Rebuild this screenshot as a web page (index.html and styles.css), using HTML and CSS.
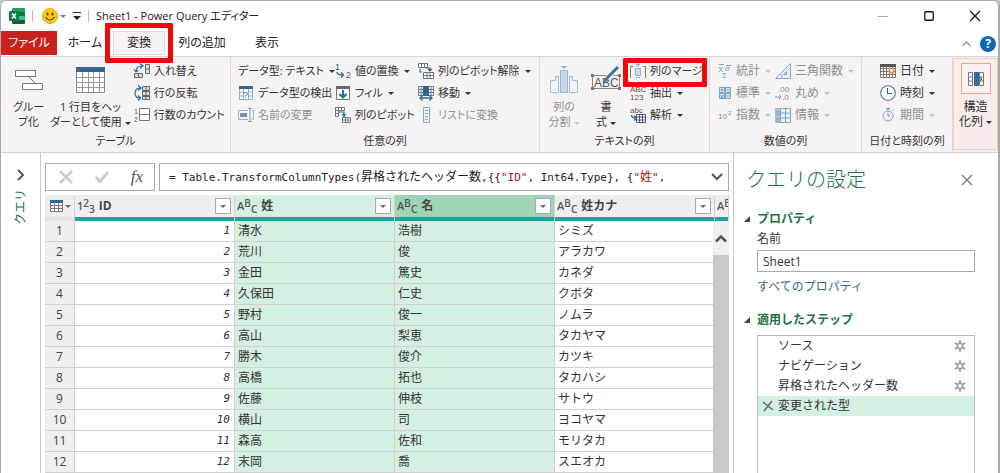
FILE: index.html
```html
<!DOCTYPE html>
<html lang="ja">
<head>
<meta charset="utf-8">
<title>Sheet1 - Power Query エディター</title>
<link rel="stylesheet" href="styles.css">
</head>
<body>
<div class="window">
  <header class="titlebar">
    <svg class="app-icon" width="16" height="16" viewBox="0 0 16 16"><rect x="3" width="13" height="16" rx="1" fill="#21a366"/><path d="M3 4h13v4H3z" fill="#107c41"/><path d="M9 8h7v4H9z" fill="#33c481"/><path d="M3 12h13v3l-1 1H4l-1-1z" fill="#185c37"/><rect y="3" width="10" height="10" rx="1" fill="#107c41"/><path d="M3 5.500l4 5M7 5.500l-4 5" stroke="#fff" stroke-width="1.500"/></svg>
    <span class="sep"></span>
    <button class="quick" aria-label="フィードバック"><svg width="16" height="16" viewBox="0 0 16 16"><circle cx="8" cy="8" r="7.500" fill="#f8c51c" stroke="#e7a614"/><ellipse cx="5.500" cy="6" rx="1" ry="1.600" fill="#5d3b08"/><ellipse cx="10.500" cy="6" rx="1" ry="1.600" fill="#5d3b08"/><path d="M3.500 9q4.500 6 9 0" fill="none" stroke="#5d3b08" stroke-width="1.200"/></svg><i class="caret blue"></i></button>
    <button class="quick" aria-label="クイック アクセス"><svg width="8" height="9" viewBox="0 0 8 9"><path d="M0 .5h8" stroke="#222"/><path d="M0 4h8L4 8z" fill="#222"/></svg></button>
    <span class="sep"></span>
    <h1>Sheet1 - Power Query エディター</h1>
    <div class="win-buttons">
      <button aria-label="最小化"><svg width="10" height="10"><path d="M0 5.500h10" stroke="#aaa"/></svg></button>
      <button aria-label="最大化"><svg width="10" height="10"><rect x=".75" y=".75" width="8.500" height="8.500" rx="1" fill="none" stroke="#111" stroke-width="1.300"/></svg></button>
      <button aria-label="閉じる"><svg width="10" height="10"><path d="M0 0l10 10M10 0L0 10" stroke="#111" stroke-width="1.200"/></svg></button>
    </div>
  </header>

  <nav class="tabs">
    <button class="file">ファイル</button>
    <button>ホーム</button>
    <button class="active marked">変換</button>
    <button class="wide">列の追加</button>
    <button>表示</button>
    <div class="help">
      <button aria-label="リボンを折りたたむ"><svg width="9" height="6"><path d="M.5 5l4-4 4 4" fill="none" stroke="#999" stroke-width="1.300"/></svg></button>
      <button class="help-button">?</button>
    </div>
  </nav>

  <section class="ribbon">
    <div class="group">
      <div class="tools g-table">
        <button class="big"><svg width="28" height="26" viewBox="0 0 28 26"><path d="M13 9l7 7" stroke="#777"/><path d="M.5 3.500h20v6H.5zM7.500 16.500h20v6h-20z" fill="#fff" stroke="#777"/></svg><span>グルー<br>プ化</span></button>
        <button class="big"><svg width="29" height="26" viewBox="0 0 29 26"><path d="M.5.500h28v25H.5z" fill="#fff" stroke="#888"/><path d="M0 0h29v5H0z" fill="#35678e"/><path d="M6.500 5v20M12.500 5v20M17.500 5v20M23.500 5v20M1 10.500h27M1 15.500h27M1 20.500h27" stroke="#999"/></svg><span>1 行目をヘッ<br>ダーとして使用<i class="caret"></i></span></button>
        <div class="stack">
          <button class="tool"><svg width="16" height="16" viewBox="0 0 16 16"><path d="M11.500 1.500h4v9h-4zM11.500 6h4M.5 10.500h8v4h-8zM4.500 10.500v4" fill="#ddd" stroke="#666"/><path d="M2 9q0-6 6-6M6 .5L9 3 6 5.500M0 6.500L2 9l2.500-2" fill="none" stroke="#2b6a9c" stroke-width="1.200"/></svg>入れ替え</button>
          <button class="tool"><svg width="16" height="16" viewBox="0 0 16 16"><path d="M8.500 1.500h7v4h-7zM8.500 6.500h7v4h-7zM8.500 11.500h7v3h-7zM12 1.500v13" fill="#ddd" stroke="#666"/><path d="M7 3Q1 3 1 8t5 5M4 .5L7 3 4 5.500M4 10.500L6.500 13 4 15.500" fill="none" stroke="#2b6a9c" stroke-width="1.200"/></svg>行の反転</button>
          <button class="tool"><svg width="16" height="16" viewBox="0 0 16 16"><path d="M5.500 1.500h10v12h-10zM5.500 7.500h10" fill="#fff" stroke="#777"/><text x="0" y="7" class="t7 blue-t">1</text><text x="0" y="15" class="t7 blue-t">2</text></svg>行数のカウント</button>
        </div>
      </div>
      <h2>テーブル</h2>
    </div>

    <div class="group">
      <div class="tools g-any">
        <div class="stack">
          <button class="tool plain">データ型: テキスト<i class="caret"></i></button>
          <button class="tool"><svg width="16" height="16" viewBox="0 0 16 16"><path d="M1.500 1.500h13v13h-13zM1.500 7h13M1.500 11h13M5.500 3v12M10.500 3v12" fill="#fff" stroke="#9ab"/><path d="M1 1h14v3H1z" fill="#35678e"/><path d="M6 5h4v8H6z" fill="#fff"/><text x="5" y="13" class="t9 blue-t">?</text></svg>データ型の検出</button>
          <button class="tool" disabled><svg width="16" height="16" viewBox="0 0 16 16"><path d="M10 3.500H.5v9H10M14 3.500h1.500v9H14" fill="none" stroke="#9ab0c4"/><path d="M2 6h7v4H2z" fill="#7395b5"/><path d="M10 1.500h4M10 14.500h4M12 1.500v13" stroke="#8297ab"/></svg>名前の変更</button>
        </div>
        <div class="stack">
          <button class="tool"><svg width="16" height="16" viewBox="0 0 16 16"><text x="0" y="7" class="t9">1</text><text x="11" y="15" class="t9">2</text><path d="M2 9q0 3 6 3M6 9.500L8.500 12 6 14.500" fill="none" stroke="#2b6a9c" stroke-width="1.400"/></svg>値の置換<i class="caret"></i></button>
          <button class="tool"><svg width="16" height="16" viewBox="0 0 16 16"><path d="M1.500 1.500h13v13h-13z" fill="#fff" stroke="#777"/><path d="M1 1h14v3H1z" fill="#666"/><path d="M8 5v8M4.500 9L8 12.500 11.500 9" fill="none" stroke="#2b6a9c" stroke-width="2"/></svg>フィル<i class="caret"></i></button>
          <button class="tool"><svg width="16" height="16" viewBox="0 0 16 16"><path d="M.5.500h9v3h-9zM.5.500v9h3v-9M6.500.500v3M.5 6.500h3M7.500 10.500h8v5h-8zM7.500 13h8M10.500 10.500v5M13 10.500v5" fill="#fff" stroke="#777"/><path d="M4 5h5v4M7 7l2 2.500L11 7" fill="none" stroke="#2b6a9c" stroke-width="1.200"/></svg>列のピボット</button>
        </div>
        <div class="stack">
          <button class="tool"><svg width="16" height="16" viewBox="0 0 16 16"><path d="M.5.500h9v4h-9zM3.500.500v4M6.500.500v4M5.500 9.500h10v6h-10zM5.500 12.500h10M9 9.500v6M12 9.500v6" fill="#fff" stroke="#777"/><path d="M2 6v3h2M8 5h4v3M10 6l2 2 2-2" fill="none" stroke="#2b6a9c" stroke-width="1.200"/></svg>列のピボット解除<i class="caret"></i></button>
          <button class="tool"><svg width="16" height="16" viewBox="0 0 16 16"><path d="M.5 1.500h15v9H.5zM.5 4.500h15M.5 7.500h15M3 1.500v9M13 1.500v9" fill="#fff" stroke="#777"/><path d="M5 1h6v10H5z" fill="#2f6690"/><path d="M2 13h12M4.500 10.500L2 13l2.500 2.500M11.500 10.500L14 13l-2.500 2.500" fill="none" stroke="#2b6a9c" stroke-width="1.300"/></svg>移動<i class="caret"></i></button>
          <button class="tool" disabled><svg width="16" height="16" viewBox="0 0 16 16"><path d="M5.500.500h6v15h-6zM7 3.500h3M7 6.500h3M7 9.500h3M7 12.500h3" fill="#edf3fa" stroke="#8ca9c7"/></svg>リストに変換</button>
        </div>
      </div>
      <h2>任意の列</h2>
    </div>

    <div class="group">
      <div class="tools g-text">
        <button class="big" disabled><svg width="28" height="28" viewBox="0 0 28 28"><path d="M10.500 4.500h7v22h-7z" fill="#c5d7ea" stroke="#9db3c9"/><path d="M.5 26.500v-12h5v-4h3v16zM27.500 26.500v-12h-5v-4h-3v16z" fill="#eef3f9" stroke="#a9bccf"/><path d="M11 0h6l-3 3z" fill="#9db3c9"/></svg><span>列の<br>分割<i class="caret"></i></span></button>
        <button class="big"><svg width="30" height="28" viewBox="0 0 30 28"><path d="M1.500 9.500h27v13h-27z" fill="none" stroke="#888"/><path d="M0 8h3v3H0zM27 8h3v3h-3zM0 21h3v3H0zM27 21h3v3h-3z" fill="#777"/><text x="3" y="21" class="t12">ABC</text><path d="M27 1L15 13" stroke="#f5f3f4" stroke-width="5"/><path d="M27 1L16 12" stroke="#35729f" stroke-width="3"/><path d="M15 11l3 3-6 3z" fill="#35729f"/></svg><span>書<br>式<i class="caret"></i></span></button>
        <div class="stack">
          <button class="tool marked"><svg width="16" height="16" viewBox="0 0 16 16"><path d="M3 3.500H.5V15M13 3.500h2.500V15" fill="none" stroke="#777"/><path d="M5.500 5.500h5v7h-5z" fill="#cbdced" stroke="#8fabc7"/><path d="M6 1.500h4M6 14.500h4M8 0v4" stroke="#8fabc7"/></svg>列のマージ</button>
          <button class="tool"><svg width="16" height="16" viewBox="0 0 16 16"><text x="0" y="7" class="t8">ABC</text><text x="0" y="15" class="t8">123</text></svg>抽出<i class="caret"></i></button>
          <button class="tool"><svg width="16" height="16" viewBox="0 0 16 16"><text x="0" y="6" class="t8">abc</text><path d="M6.500 7.500h9v8h-9zM6.500 10h9M6.500 13h9M9.500 8v7M12.500 8v7" fill="#fff" stroke="#558"/><path d="M1.500 8q0 3 4 3M4 8.500L6.500 11 4 13.500" fill="none" stroke="#2b6a9c" stroke-width="1.300"/></svg>解析<i class="caret"></i></button>
        </div>
      </div>
      <h2>テキストの列</h2>
    </div>

    <div class="group">
      <div class="tools g-number">
        <div class="stack">
          <button class="tool" disabled><svg width="14" height="16" viewBox="0 0 14 16"><path d="M1 1.500h5M8 2.500h5" stroke="#8ba1b8"/><text x="0" y="9" class="t8">X</text><text x="7" y="8" class="t8">σ</text><text x="4" y="15" class="t8">Σ</text></svg>統計<i class="caret"></i></button>
          <button class="tool" disabled><svg width="14" height="16" viewBox="0 0 14 16"><path d="M1.500 2.500h5v5h-5zM7.500 2.500h5v5h-5zM1.500 8.500h5v5h-5zM7.500 8.500h5v5h-5z" fill="#dce7f3" stroke="#7f9fc1"/><path d="M2.500 5h3M4 3.500v3M8.500 5h3M2.500 10l3 3M5.500 10l-3 3M8.500 11h3" stroke="#6d8fb4"/></svg>標準<i class="caret"></i></button>
          <button class="tool" disabled><svg width="14" height="16" viewBox="0 0 14 16"><text x="0" y="12" class="t8">10</text><text x="10" y="8" class="t6">2</text></svg>指数<i class="caret"></i></button>
        </div>
        <div class="stack">
          <button class="tool" disabled><svg width="16" height="16" viewBox="0 0 16 16"><path d="M15.500.5v15H.5zM11.500 8.500v3h-3zM5 11q3 1 2 4" fill="#e6eef8" stroke="#8ba6c4"/></svg>三角関数<i class="caret"></i></button>
          <button class="tool" disabled><svg width="16" height="16" viewBox="0 0 16 16"><text x="3" y="7" class="t8">.00</text><text x="7" y="15" class="t8">.0</text><path d="M0 12h6M4 10l2 2-2 2" fill="none" stroke="#6b93bd"/></svg>丸め<i class="caret"></i></button>
          <button class="tool" disabled><svg width="16" height="16" viewBox="0 0 16 16"><path d="M.5 1.500h15v14H.5zM5.500 1.500v14M5.500 6h10M5.500 11h10M10.500 1.500v14" fill="#edf3fa" stroke="#86a1bf"/><path d="M0 1h5v15H0z" fill="#a9c0da"/><text x="1" y="8" class="t6">1</text><text x="1" y="15" class="t6">3</text></svg>情報<i class="caret"></i></button>
        </div>
      </div>
      <h2>数値の列</h2>
    </div>

    <div class="group">
      <div class="tools g-date">
        <div class="stack">
          <button class="tool"><svg width="16" height="16" viewBox="0 0 16 16"><path d="M.5 1.500h15v13H.5zM.5 5.500h15M.5 8.500h15M.5 11.500h15M3.500 4v10M6.500 4v10M9.500 4v10M12.500 4v10" fill="#fff" stroke="#777"/><path d="M0 1h16v3H0z" fill="#555"/><path d="M9.500 5.500h4v4h-4z" fill="#fff" stroke="#e08a3c" stroke-width="1.500"/></svg>日付<i class="caret"></i></button>
          <button class="tool"><svg width="16" height="16" viewBox="0 0 16 16"><circle cx="8" cy="8" r="7.300" fill="#fff" stroke="#5d7489" stroke-width="1.100"/><path d="M7.500 3v5.500H12" fill="none" stroke="#2b6a9c" stroke-width="1.200"/></svg>時刻<i class="caret"></i></button>
          <button class="tool" disabled><svg width="16" height="16" viewBox="0 0 16 16"><circle cx="8" cy="9" r="5" fill="#eef3fa" stroke="#8ba6c4"/><path d="M6 1.500h4M8 1.500V4M12 4l1.500-1.500M8 6v3h2" fill="none" stroke="#6f91b5"/></svg>期間<i class="caret"></i></button>
        </div>
      </div>
      <h2>日付と時刻の列</h2>
    </div>

    <button class="big structured"><span class="structured-icon"><svg width="16" height="14" viewBox="0 0 16 14"><path d="M.5.500h4v13h-4zM.5 5h4M.5 9h4M11.500.500h4v13h-4zM11.500 5h4M11.500 9h4" fill="#fff" stroke="#777"/><path d="M6 0h5v14H6z" fill="#2f6f9f"/><path d="M9 7h5M12 5l2 2-2 2" fill="none" stroke="#2f6f9f"/></svg></span><span>構造<br>化列<i class="caret"></i></span></button>
  </section>

  <main class="workspace">
    <aside class="queries">
      <button aria-label="展開"><svg width="8" height="12"><path d="M1 1l5 5-5 5" fill="none" stroke="#555" stroke-width="2"/></svg></button>
      <span class="vertical">クエリ</span>
    </aside>

    <section class="editor">
      <div class="formula-row">
        <div class="formula-actions">
          <button aria-label="取消"><svg width="14" height="12"><path d="M1 0l12 12M13 0L1 12" stroke="#ccc" stroke-width="2.500"/></svg></button>
          <button aria-label="確定"><svg width="14" height="12"><path d="M1 6l4 4.500L13 1" fill="none" stroke="#ccc" stroke-width="3"/></svg></button>
          <button class="fx">fx</button>
        </div>
        <div class="formula"><code>= Table.TransformColumnTypes(<span class="jp">昇格されたヘッダー数</span>,{{<b>"ID"</b>, Int64.Type}, {<b>"<span class="jp">姓</span>"</b>,</code>
          <button aria-label="数式バーを展開"><svg width="12" height="8"><path d="M1 1l5 5 5-5" fill="none" stroke="#555" stroke-width="2"/></svg></button></div>
      </div>

      <div class="grid-wrap">
        <table>
          <colgroup><col class="c-no"><col class="c-data"><col class="c-data"><col class="c-data"><col class="c-data"><col></colgroup>
          <thead><tr>
            <th><div class="head corner"><svg width="13" height="12" viewBox="0 0 13 12"><path d="M.5.500h12v11H.5zM.5 5.500h12M.5 8.500h12M4.500 3v8M8.500 3v8" fill="#fff" stroke="#777"/><path d="M0 0h13v3H0z" fill="#35678e"/></svg><i class="caret"></i></div><div class="quality off"></div></th>
            <th><div class="head"><span class="type"><span>1</span><span>2</span><span>3</span></span>ID<button class="filter" aria-label="ID フィルター"><i class="caret"></i></button></div><div class="quality"></div></th>
            <th class="sel"><div class="head"><span class="type"><span>A</span><span>B</span><span>C</span></span>姓<button class="filter" aria-label="姓 フィルター"><i class="caret"></i></button></div><div class="quality"></div></th>
            <th class="sel strong"><div class="head"><span class="type"><span>A</span><span>B</span><span>C</span></span>名<button class="filter" aria-label="名 フィルター"><i class="caret"></i></button></div><div class="quality"></div></th>
            <th><div class="head"><span class="type"><span>A</span><span>B</span><span>C</span></span>姓カナ<button class="filter" aria-label="姓カナ フィルター"><i class="caret"></i></button></div><div class="quality"></div></th>
            <th><div class="head"><span class="type"><span>A</span><span>B</span><span>C</span></span></div><div class="quality"></div></th>
          </tr></thead>
          <tbody>
            <tr><th>1</th><td class="num">1</td><td class="sel">清水</td><td class="sel">浩樹</td><td>シミズ</td><td></td></tr>
            <tr><th>2</th><td class="num">2</td><td class="sel">荒川</td><td class="sel">俊</td><td>アラカワ</td><td></td></tr>
            <tr><th>3</th><td class="num">3</td><td class="sel">金田</td><td class="sel">篤史</td><td>カネダ</td><td></td></tr>
            <tr><th>4</th><td class="num">4</td><td class="sel">久保田</td><td class="sel">仁史</td><td>クボタ</td><td></td></tr>
            <tr><th>5</th><td class="num">5</td><td class="sel">野村</td><td class="sel">俊一</td><td>ノムラ</td><td></td></tr>
            <tr><th>6</th><td class="num">6</td><td class="sel">高山</td><td class="sel">梨恵</td><td>タカヤマ</td><td></td></tr>
            <tr><th>7</th><td class="num">7</td><td class="sel">勝木</td><td class="sel">俊介</td><td>カツキ</td><td></td></tr>
            <tr><th>8</th><td class="num">8</td><td class="sel">高橋</td><td class="sel">拓也</td><td>タカハシ</td><td></td></tr>
            <tr><th>9</th><td class="num">9</td><td class="sel">佐藤</td><td class="sel">伸枝</td><td>サトウ</td><td></td></tr>
            <tr><th>10</th><td class="num">10</td><td class="sel">横山</td><td class="sel">司</td><td>ヨコヤマ</td><td></td></tr>
            <tr><th>11</th><td class="num">11</td><td class="sel">森高</td><td class="sel">佐和</td><td>モリタカ</td><td></td></tr>
            <tr><th>12</th><td class="num">12</td><td class="sel">末岡</td><td class="sel">喬</td><td>スエオカ</td><td></td></tr>
          </tbody>
        </table>
        <div class="scrollbar"><button aria-label="上へ"><svg width="12" height="9"><path d="M1 7.500l5-5 5 5" fill="none" stroke="#555" stroke-width="2.500"/></svg></button><div class="thumb"></div></div>
      </div>
    </section>

    <aside class="settings">
      <div class="settings-head"><h2>クエリの設定</h2><button aria-label="閉じる"><svg width="12" height="12"><path d="M1 1l10 10M11 1L1 11" stroke="#777" stroke-width="1.300"/></svg></button></div>
      <h3><i class="tri"></i>プロパティ</h3>
      <div class="props">
        <label for="query-name">名前</label>
        <input id="query-name" value="Sheet1">
        <a href="#">すべてのプロパティ</a>
      </div>
      <h3><i class="tri"></i>適用したステップ</h3>
      <ul class="steps">
        <li><span></span>ソース<svg class="gear" width="12" height="12" viewBox="0 0 12 12"><circle cx="6" cy="6" r="2.700"/><path d="M6 0v3M6 9v3M.8 3l2.600 1.500M8.600 7.500L11.200 9M.8 9l2.600-1.500M8.600 4.500L11.200 3"/></svg></li>
        <li><span></span>ナビゲーション<svg class="gear" width="12" height="12" viewBox="0 0 12 12"><circle cx="6" cy="6" r="2.700"/><path d="M6 0v3M6 9v3M.8 3l2.600 1.500M8.600 7.500L11.200 9M.8 9l2.600-1.500M8.600 4.500L11.200 3"/></svg></li>
        <li><span></span>昇格されたヘッダー数<svg class="gear" width="12" height="12" viewBox="0 0 12 12"><circle cx="6" cy="6" r="2.700"/><path d="M6 0v3M6 9v3M.8 3l2.600 1.500M8.600 7.500L11.200 9M.8 9l2.600-1.500M8.600 4.500L11.200 3"/></svg></li>
        <li class="current"><span><svg width="10" height="10"><path d="M0 1l10 8M9 0L1 10" stroke="#666" stroke-width="1.500"/></svg></span>変更された型</li>
      </ul>
    </aside>
  </main>
</div>
</body>
</html>
```
FILE: styles.css
```css
* { box-sizing: border-box; }

body {
  margin: 0;
  background: #c9c9c9;
  color: #333;
  font: 12px/16px "Open Sans", "Noto Sans CJK JP", sans-serif;
}

h1, h2, h3 { margin: 0; font-size: 12px; font-weight: 400; }

button {
  display: flex;
  align-items: center;
  justify-content: center;
  padding: 0;
  border: 0;
  background: none;
  color: inherit;
  font: inherit;
}

svg { flex: none; overflow: visible; }

.window {
  display: flex;
  flex-direction: column;
  height: 100vh;
  overflow: hidden;
  border: 1px solid #aaa;
  border-width: 1px 2px 0 1px;
  border-radius: 6px 6px 0 0;
  background: #fff;
}

.caret {
  flex: none;
  display: inline-block;
  margin-left: 3px;
  border: 3px solid transparent;
  border-top: 3px solid #333;
  border-bottom: 0;
  vertical-align: middle;
}
.caret.blue { margin-left: 2px; border-top-color: #5c7fa3; }
button:disabled .caret { border-top-color: #c4c4c4; }

/* title bar */
.titlebar { display: flex; align-items: center; height: 30px; flex: none; padding-left: 8px; }
.sep { width: 1px; height: 12px; margin: 0 9px 0 7px; background: #bbb; }
.quick { margin-right: 7px; }
.quick + .sep { margin-left: 0; margin-right: 7px; }
.titlebar h1, .tabs { color: #222; font-feature-settings: "palt"; }
.titlebar h1 { font-size: 11px; }
.win-buttons { display: flex; margin-left: auto; }
.win-buttons button { width: 46px; height: 28px; }

/* tabs */
.tabs { display: flex; height: 26px; flex: none; border-bottom: 1px solid #d8d6d6; }
.tabs button { height: 24px; width: 56px; }
.tabs .file { background: #c9211e; color: #fff; }
.tabs .active { position: relative; width: 52px; border: 1px solid #dcdada; background: #f5f3f4; }
.tabs .wide { width: 74px; }
.tabs .help { display: flex; align-items: center; gap: 6px; margin-left: auto; padding-right: 2px; }
.tabs .help button { width: 16px; height: 16px; }
.tabs .help .help-button { border-radius: 50%; background: #1267b4; color: #fff; font-weight: 700; }

.marked::after {
  content: "";
  position: absolute;
  z-index: 2;
  inset: -9px;
  border: 5px solid #ee0a0a;
  border-radius: 1px;
}
.tool.marked::after { inset: -2px -4px -5px -7px; }

/* ribbon */
.ribbon {
  display: grid;
  grid-template-columns: minmax(0, 230fr) minmax(0, 309fr) minmax(0, 170fr) minmax(0, 152fr) minmax(0, 91fr) minmax(0, 45fr);
  height: 96px;
  flex: none;
  border-bottom: 1px solid #d2d0d0;
  background: #f5f3f4;
  font-size: 11px;
  font-feature-settings: "palt";
  white-space: nowrap;
}
.group { display: flex; flex-direction: column; border-right: 1px solid #dcdada; }
.group h2 { margin-top: 6px; font-size: 11px; text-align: center; }
.tools { display: flex; padding-top: 3px; height: 70px; }
.stack { display: flex; flex-direction: column; align-items: flex-start; }
.tool { position: relative; gap: 4px; height: 22px; }
.tool .caret { margin-left: 1px; }
.big { flex-direction: column; justify-content: flex-start; gap: 5px; padding-top: 6px; line-height: 15px; }
.big svg { height: 28px; }
button:disabled { color: #8f8f8f; }

.g-table { padding-left: 12px; gap: 6px; }
.g-table .stack { margin-left: -3px; }
.g-any { padding-left: 7px; }
.g-any .stack:nth-child(1) { width: 97px; }
.g-any .stack:nth-child(2) { width: 83px; }
.g-text { padding-left: 9px; gap: 9px; }
.g-text .big { width: 30px; }
.g-text .big + .big { margin-left: 3px; }
.g-number, .g-date { font-size: 12px; }
.g-number { padding-left: 8px; }
.g-number .stack:first-child { width: 57px; }
.g-date { padding-left: 18px; }

.structured { margin: 1px 0 2px; border: 1px solid #eccac6; background: #f9ecea; padding-top: 4px; font-size: 12px; }
.structured-icon { display: grid; place-items: center; width: 30px; height: 31px; border: 1px solid #eba79e; background: #fbf1f0; }
.structured-icon svg { height: 14px; }

text { fill: #555; font-family: "Liberation Sans", sans-serif; }
.blue-t { fill: #2b6a9c; }
button:disabled text { fill: #7b91aa; }
.t6 { font-size: 6px; }
.t7 { font-size: 7px; }
.t8 { font-size: 8px; }
.t9 { font-size: 9px; }
.t12 { font-size: 12px; }

/* workspace */
.workspace { display: grid; grid-template-columns: 40px minmax(0, 1fr) 265px; flex: 1; min-height: 0; }
.queries { display: flex; flex-direction: column; align-items: center; gap: 8px; padding-top: 16px; border-right: 1px solid #ccc; }
.vertical { writing-mode: vertical-rl; text-orientation: sideways; transform: rotate(180deg); color: #217346; }

.editor { display: flex; flex-direction: column; gap: 4px; padding: 10px 4px 0; min-height: 0; }
.formula-row { display: flex; gap: 4px; }
.formula-actions, .formula { display: flex; align-items: center; height: 28px; border: 1px solid #aaa; }
.formula-actions { width: 110px; justify-content: space-between; padding: 0 11px 0 13px; }
.fx { color: #555; font: italic 17px/20px "Liberation Serif", serif; }
.formula { flex: 1; min-width: 0; justify-content: space-between; padding: 0 5px 0 9px; }
.formula code { color: #222; font: 11px/16px "DejaVu Sans Mono", "Noto Sans CJK JP", monospace; white-space: nowrap; }
.formula b { color: #a31515; font-weight: 400; }
.formula .jp { font-family: "Noto Sans CJK JP", sans-serif; font-size: 12px; }

.grid-wrap { position: relative; flex: 1; min-height: 0; overflow: hidden; }
table { width: 100%; table-layout: fixed; border-collapse: separate; border-spacing: 0; }
.c-no { width: 30px; }
.c-data { width: 160px; }
th, td { padding: 0; overflow: hidden; border-right: 1px solid #d0d0d0; font-weight: 400; white-space: nowrap; }
thead th { background: #efefef; color: #444; font-weight: 700; text-align: left; }
.head { display: flex; align-items: center; gap: 4px; height: 22px; padding: 0 3px 0 2px; }
.corner { gap: 0; padding-left: 5px; }
.corner .caret { margin-left: 2px; border-top-color: #666; }
.quality { height: 4px; background: #18a79d; }
.quality.off { background: #e3e3e3; }
.type { display: flex; color: #555; font-size: 11px; font-weight: 600; line-height: 14px; }
.type span:nth-child(2) { margin: -3px 0 3px; font-size: 10px; }
.type span:nth-child(3) { margin: 3px 0 -3px; font-size: 10px; }
.filter { width: 16px; height: 16px; margin-left: auto; border: 1px solid #aaa; background: #fff; }
.filter .caret { margin: 0; border-top-color: #666; }
tbody th, tbody td { height: 21px; border-bottom: 1px solid #d0d0d0; line-height: 16px; }
tbody th { background: #efefef; text-align: center; color: #444; }
tbody td { padding-left: 3px; }
.num { padding-right: 4px; text-align: right; font: italic 11px/16px "DejaVu Sans Mono", monospace; }
.sel { background: #d3f0e0; }
thead .sel { background: #d3f0e0; }
thead .sel.strong { background: #9fd5b7; }
.scrollbar { position: absolute; top: 26px; right: 0; bottom: 0; display: flex; flex-direction: column; width: 16px; background: #efefef; }
.scrollbar button { height: 34px; flex: none; }
.thumb { flex: 1; background: #c9c9c9; }

/* query settings */
.settings { display: flex; flex-direction: column; padding: 13px 23px 0 10px; border-left: 1px solid #ccc; }
.settings-head { display: flex; align-items: center; justify-content: space-between; padding: 0 2px; }
.settings-head h2 { color: #217346; font-size: 20px; font-weight: 300; line-height: 28px; }
.settings h3 { display: flex; align-items: center; gap: 7px; margin-top: 17px; color: #217346; font-weight: 700; }
.tri { border-left: 6px solid transparent; border-bottom: 6px solid #444; }
.props { display: flex; flex-direction: column; padding: 4px 0 0 13px; }
.props input { height: 22px; min-width: 0; margin: 3px 0 7px; padding: 0 5px; border: 1px solid #aaa; color: #333; font: inherit; }
.props a { color: #44648a; text-decoration: none; }
.steps { flex: 1; margin: 7px 0 0 13px; padding: 0; border: 1px solid #bbb; border-bottom: 0; list-style: none; }
.steps li { display: flex; align-items: center; height: 20px; padding-right: 8px; }
.steps li span { display: grid; place-items: center; width: 20px; }
.steps .current { background: #d3f0e0; }
.gear { margin-left: auto; fill: none; stroke: #999; stroke-width: 1.500; }
```
